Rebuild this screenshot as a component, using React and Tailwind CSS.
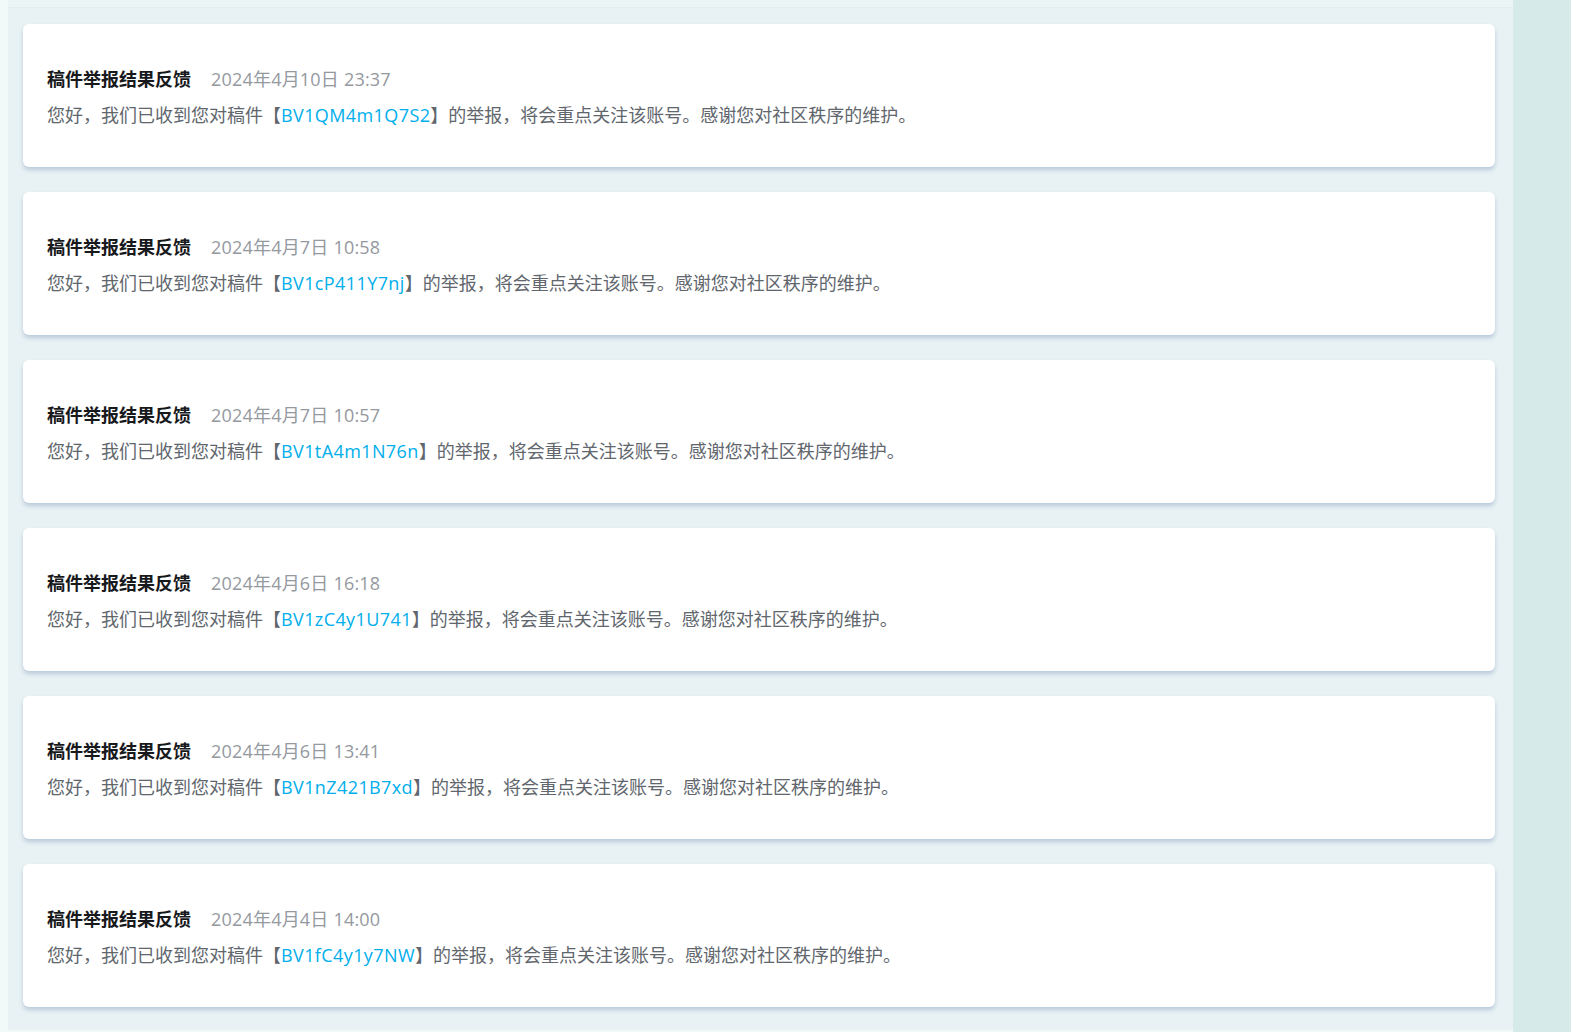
const items = [
  { date: '2024年4月10日 23:37', bv: 'BV1QM4m1Q7S2' },
  { date: '2024年4月7日 10:58', bv: 'BV1cP411Y7nj' },
  { date: '2024年4月7日 10:57', bv: 'BV1tA4m1N76n' },
  { date: '2024年4月6日 16:18', bv: 'BV1zC4y1U741' },
  { date: '2024年4月6日 13:41', bv: 'BV1nZ421B7xd' },
  { date: '2024年4月4日 14:00', bv: 'BV1fC4y1y7NW' },
];

const font = { fontFamily: '"Open Sans", "Noto Sans CJK SC", sans-serif' };

function Notice({ date, bv }) {
  return (
    <div className="bg-white rounded-md px-6 pt-[43px] pb-[40px] shadow-[0_3px_4px_rgba(130,155,190,0.45)]">
      <div className="flex items-center h-6 leading-6">
        <span className="text-[18px] font-bold text-[#18191c]">稿件举报结果反馈</span>
        <span className="ml-5 text-[18px] tracking-[0.2px] text-[#9499a0]">{date}</span>
      </div>
      <p className="mt-3 h-6 leading-6 text-[18px] text-[#61666d]">
        您好，我们已收到您对稿件【<span className="text-[#00aeec] tracking-[0.4px]">{bv}</span>】的举报，将会重点关注该账号。感谢您对社区秩序的维护。
      </p>
    </div>
  );
}

export default function App() {
  return (
    <div className="flex h-[1032px] w-full overflow-hidden bg-[#f2f9f9]" style={font}>
      <div className="w-[8px] shrink-0" />
      <div className="flex-1 flex flex-col bg-[#e8f2f4] h-[1030px]">
        <div className="h-[8px] shrink-0 bg-[#ecf5f6] border-b border-[#e3eef0]" />
        <div className="flex flex-col gap-[25px] pt-[16px] pl-[15px] pr-[18px]">
          {items.map(it => (
            <Notice key={it.bv} {...it} />
          ))}
        </div>
      </div>
      <div className="w-[58px] shrink-0 bg-[#d6eaea]" />
    </div>
  );
}
